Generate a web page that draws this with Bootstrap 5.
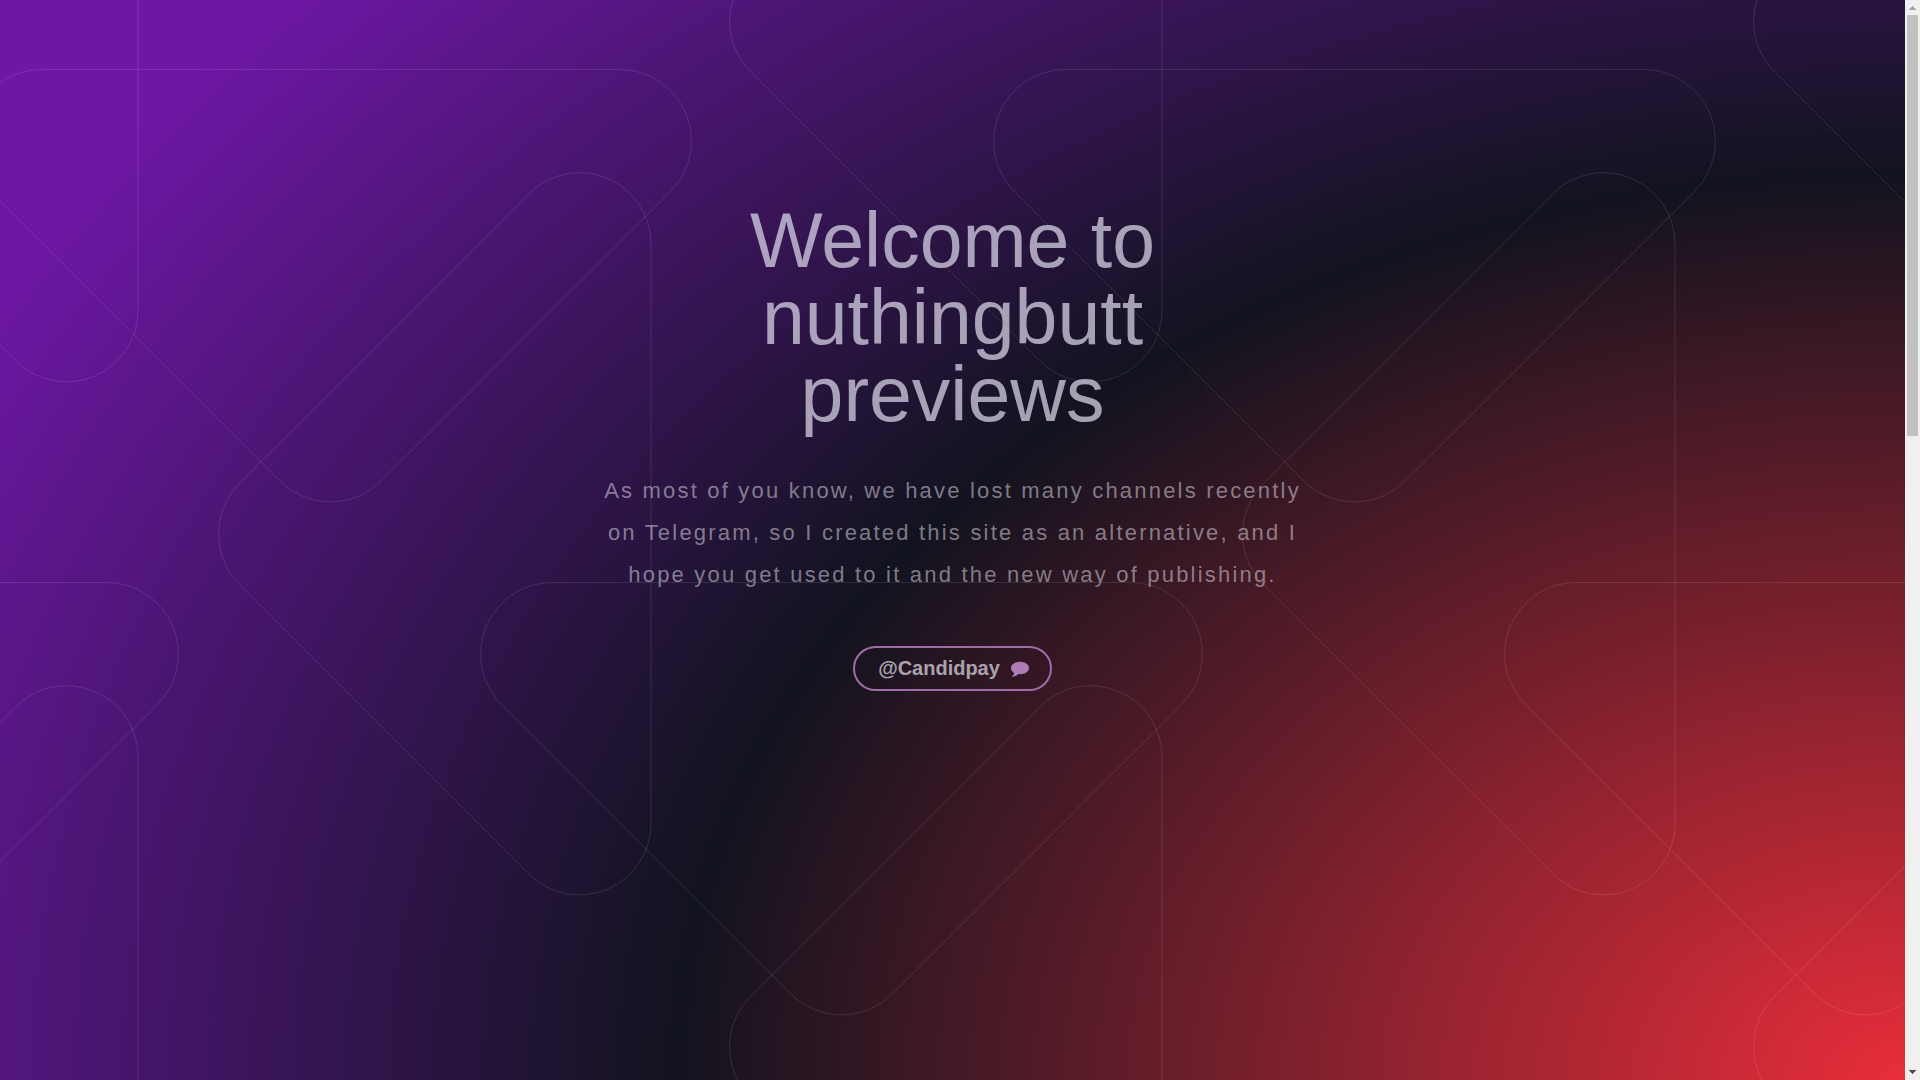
<!DOCTYPE html>
<html lang="en">
<head>
<meta charset="utf-8">
<meta name="viewport" content="width=device-width, initial-scale=1">
<title>nuthingbutt previews</title>
<link href="https://cdn.jsdelivr.net/npm/bootstrap@5.3.0/dist/css/bootstrap.min.css" rel="stylesheet">
<style>
  body { font-family: "Liberation Sans", Arial, sans-serif; background: #12131f; }
  .hero {
    background: radial-gradient(ellipse 113% 147% at 100% 100%, #e82e3a 0%, #12131f 57%, #6e17a6 102%);
  }
  .hero-lines { z-index: 0; }
  .hero-lines path { fill: none; stroke: #fff; stroke-opacity: .1; stroke-width: 1; }
  .hero-body { z-index: 1; padding-top: 202px; }
  .hero-title { max-width: 500px; font-size: 77px; line-height: 77px; font-weight: 400; color: rgba(213, 209, 228, .75); margin-bottom: 37px; }
  .hero-text { max-width: 720px; font-size: 22px; line-height: 42px; letter-spacing: .1em; color: rgba(216, 212, 222, .55); margin-bottom: 50px; }
  .btn-chat {
    --bs-btn-color: #a9a3ae; --bs-btn-hover-color: #fff;
    --bs-btn-border-color: #a06ca8; --bs-btn-hover-border-color: #c487cc;
    --bs-btn-border-width: 2px;
    height: 45px; padding: 0 21px 2px 23px; font-size: 20px; line-height: 24px; font-weight: 700; gap: 11px;
  }
  .btn-chat svg { fill: #b07cb8; margin-top: 2px; }
  .page-scroll { width: 15px; background: #f0f0f0; }
  .page-scroll svg { height: 15px; width: 15px; }
  .scroll-thumb { width: 11px; height: 39%; background: #c1c1c1; }
</style>
</head>
<body>
<div class="d-flex vh-100 overflow-hidden">
  <main class="hero position-relative flex-grow-1 overflow-hidden">
    <svg class="hero-lines position-absolute top-0 start-0 w-100 h-100" aria-hidden="true">
      <defs>
        <path id="triDown" d="M41 69.5H620A71.5 71.5 0 0 1 670.5 191.5L381 481A71.5 71.5 0 0 1 280 481L-9.500 191.5A71.5 71.5 0 0 1 41 69.5Z"/>
        <path id="triLeft" d="M651 244V823.5A71.5 71.5 0 0 1 529 874L239.5 584.500A71.5 71.5 0 0 1 239.5 483.500L529 193.5A71.5 71.5 0 0 1 651 244Z"/>
        <pattern id="tris" width="1024" height="1026" patternUnits="userSpaceOnUse">
          <use href="#triDown"/>
          <use href="#triDown" x="1024"/>
          <use href="#triDown" x="511" y="513"/>
          <use href="#triDown" x="-513" y="513"/>
          <use href="#triLeft"/>
          <use href="#triLeft" x="511" y="513"/>
          <use href="#triLeft" x="-513" y="513"/>
          <use href="#triLeft" x="511" y="-513"/>
          <use href="#triLeft" x="-513" y="-513"/>
        </pattern>
      </defs>
      <rect width="100%" height="100%" fill="url(#tris)"/>
    </svg>
    <section class="hero-body position-relative d-flex flex-column align-items-center text-center">
      <h1 class="hero-title">Welcome to nuthingbutt previews</h1>
      <p class="hero-text">As most of you know, we have lost many channels recently on Telegram, so I created this site as an alternative, and I hope you get used to it and the new way of publishing.</p>
      <a class="btn btn-chat rounded-pill d-inline-flex align-items-center" href="#">@Candidpay
        <svg width="18" height="16" viewBox="0 0 18 16" aria-hidden="true"><path d="M9 .8C4 .8 0 3.500 0 7c0 2 1.300 3.700 3.200 4.900C3 13.200 2.300 14.400 1.200 15.200c-.3.300-.1.700.3.700 2.200-.2 4.300-1.200 5.700-2.800.600.100 1.200.1 1.800.1 5 0 9-2.700 9-6.200S14 .8 9 .8z"/></svg>
      </a>
    </section>
  </main>
  <div class="page-scroll d-flex flex-column align-items-center flex-shrink-0" aria-hidden="true">
    <svg viewBox="0 0 15 15" shape-rendering="crispEdges"><path fill="#a3a3a3" d="M7 6h1v1h1v1h1v1h1v1H4V9h1V8h1V7h1z"/></svg>
    <div class="scroll-thumb"></div>
    <svg class="mt-auto" viewBox="0 0 15 15" shape-rendering="crispEdges"><path fill="#505050" d="M4 5h7v1h-1v1H9v1H8v1H7V8H6V7H5V6H4z"/></svg>
  </div>
</div>
<script src="https://cdn.jsdelivr.net/npm/bootstrap@5.3.0/dist/js/bootstrap.bundle.min.js"></script>
</body>
</html>
